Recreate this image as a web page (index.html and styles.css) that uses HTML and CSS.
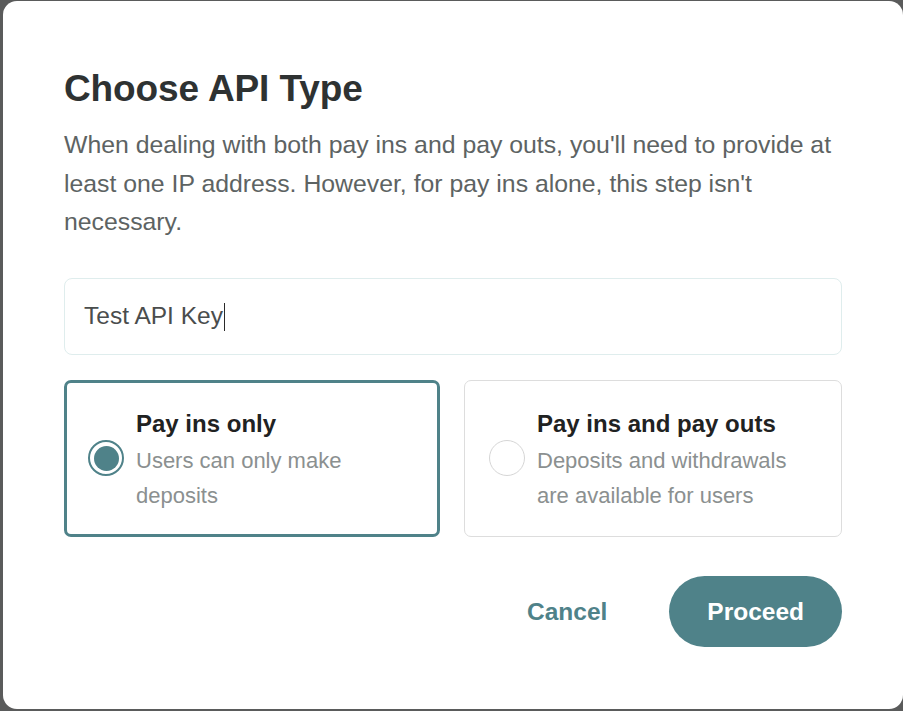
FILE: index.html
```html
<!DOCTYPE html>
<html lang="en">
<head>
<meta charset="utf-8">
<title>Choose API Type</title>
<link rel="stylesheet" href="styles.css">
</head>
<body>
<div class="dialog" role="dialog" aria-labelledby="dlg-title">
  <h1 class="title" id="dlg-title">Choose API Type</h1>
  <p class="lead">When dealing with both pay ins and pay outs, you'll need to provide at least one IP address. However, for pay ins alone, this step isn't necessary.</p>
  <div class="field"><span class="field-text">Test API Key</span><span class="caret"></span></div>
  <div class="options">
    <div class="option option-selected">
      <span class="radio radio-on"><span class="radio-dot"></span></span>
      <div class="option-text">
        <div class="option-title">Pay ins only</div>
        <div class="option-desc">Users can only make deposits</div>
      </div>
    </div>
    <div class="option">
      <span class="radio"></span>
      <div class="option-text">
        <div class="option-title">Pay ins and pay outs</div>
        <div class="option-desc">Deposits and withdrawals are available for users</div>
      </div>
    </div>
  </div>
  <div class="actions">
    <button class="btn btn-text">Cancel</button>
    <button class="btn btn-primary">Proceed</button>
  </div>
</div>
</body>
</html>
```
FILE: styles.css
```css
html, body {
  margin: 0;
  padding: 0;
}
body {
  background: #5a5b5b;
  width: 903px;
  height: 711px;
  overflow: hidden;
  font-family: "Liberation Sans", Arial, sans-serif;
}
.dialog {
  box-sizing: border-box;
  margin: 1px 0 0 3px;
  width: 900px;
  height: 708px;
  background: #ffffff;
  border-radius: 14px;
  padding: 66px 61px 62px 61px;
  display: flex;
  flex-direction: column;
}
.title {
  margin: 0;
  font-size: 37px;
  line-height: 44px;
  font-weight: 700;
  color: #2e3232;
  letter-spacing: -0.1px;
}
.lead {
  margin: 15px 0 0 0;
  font-size: 24.8px;
  line-height: 38.5px;
  color: #5d6363;
}
.field {
  margin-top: 36px;
  box-sizing: border-box;
  height: 77px;
  border: 1px solid #dfeded;
  border-radius: 8px;
  padding: 0 19px;
  display: flex;
  align-items: center;
  font-size: 24.5px;
  color: #4a4d4d;
}
.caret {
  display: inline-block;
  width: 1.5px;
  height: 28px;
  background: #2a2a2a;
  margin-left: 1px;
  margin-top: 2px;
}
.options {
  margin-top: 25px;
  display: grid;
  grid-template-columns: 376px 378px;
  gap: 24px;
}
.option {
  box-sizing: border-box;
  height: 157px;
  border: 1px solid #dddddd;
  border-radius: 7px;
  padding: 0 24px 0 24px;
  display: flex;
  align-items: center;
  gap: 12px;
}
.option-selected {
  border: 3px solid #4f8289;
  padding-left: 21px;
}
.radio {
  box-sizing: border-box;
  flex: none;
  width: 36px;
  height: 36px;
  border-radius: 50%;
  border: 1.5px solid #d6d6d6;
  display: flex;
  align-items: center;
  justify-content: center;
}
.radio-on {
  border: 2px solid #4f8289;
}
.radio-dot {
  width: 25px;
  height: 25px;
  border-radius: 50%;
  background: #4f8289;
}
.option-text {
  width: 280px;
  padding-top: 4px;
}
.option-title {
  font-size: 24px;
  line-height: 34px;
  font-weight: 700;
  color: #1f2222;
}
.option-desc {
  margin-top: 2px;
  font-size: 22px;
  line-height: 35px;
  color: #8b9090;
}
.actions {
  margin-top: auto;
  display: flex;
  justify-content: flex-end;
  gap: 25px;
}
.btn {
  height: 71px;
  border: none;
  border-radius: 36px;
  padding: 0 37px;
  font-family: "Liberation Sans", Arial, sans-serif;
  font-size: 24.5px;
  font-weight: 700;
  cursor: pointer;
}
.btn-text {
  background: transparent;
  color: #4f8289;
}
.btn-primary {
  background: #4f8289;
  color: #ffffff;
  padding: 0 38px;
}
```
